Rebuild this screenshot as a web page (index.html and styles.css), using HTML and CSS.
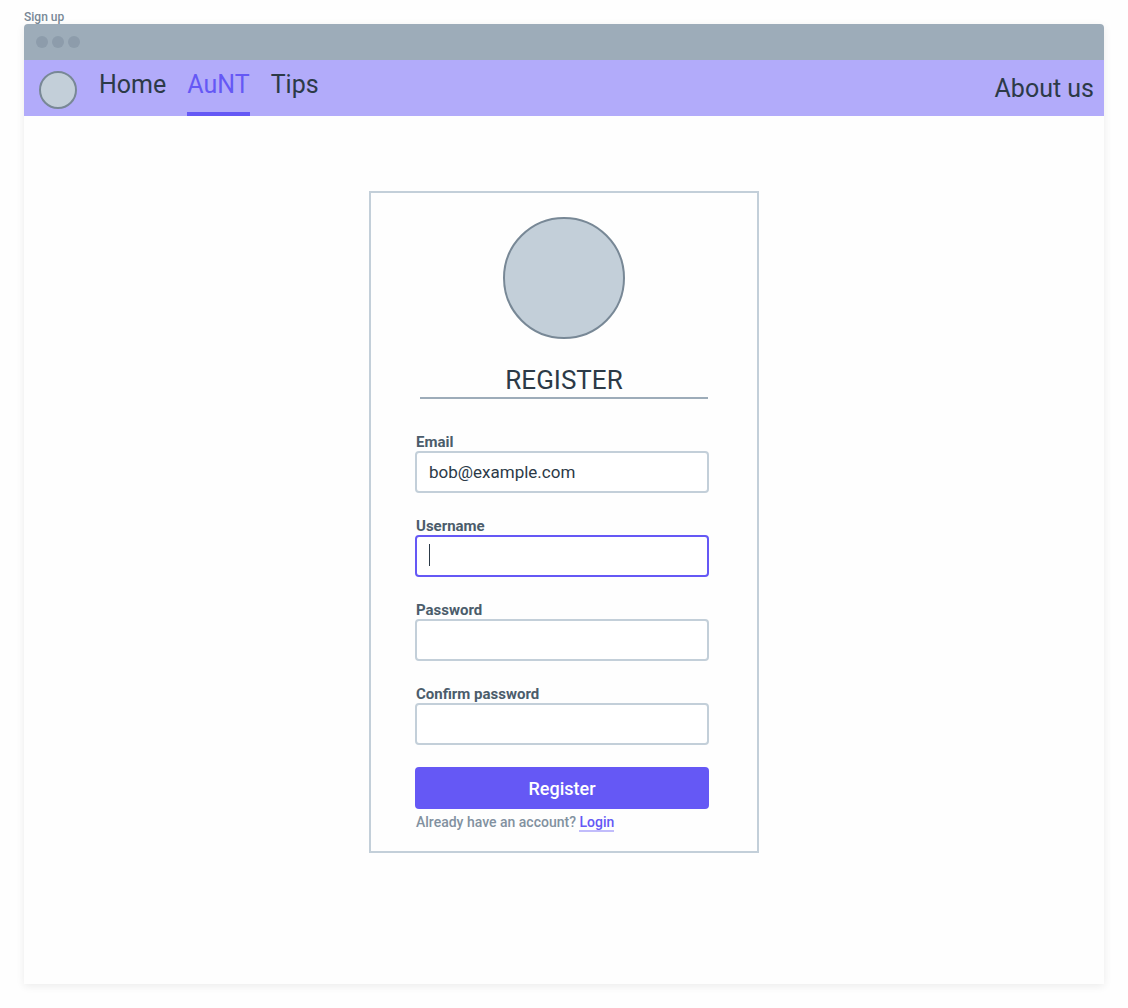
FILE: index.html
```html
<!DOCTYPE html>
<html lang="en">
<head>
  <meta charset="utf-8">
  <meta name="viewport" content="width=device-width, initial-scale=1">
  <title>Sign up</title>
  <link rel="stylesheet" href="styles.css">
</head>
<body>
  <div class="page">
    <p class="page-label">Sign up</p>
    <div class="window">
      <div class="titlebar">
        <span class="dot"></span>
        <span class="dot"></span>
        <span class="dot"></span>
      </div>
      <header class="navbar">
        <a class="logo" href="#" aria-label="Start page"></a>
        <nav class="tabs">
          <a class="tab" href="#">Home</a>
          <a class="tab tab-active" href="#" aria-current="page">AuNT</a>
          <a class="tab" href="#">Tips</a>
        </nav>
        <a class="about" href="#">About us</a>
      </header>
      <main class="content">
        <section class="card">
          <div class="avatar"></div>
          <h1 class="title">REGISTER</h1>
          <form class="form">
            <div class="field">
              <label class="label" for="email">Email</label>
              <input class="input" id="email" type="email" value="bob@example.com">
            </div>
            <div class="field">
              <label class="label" for="username">Username</label>
              <input class="input input-active" id="username" type="text">
            </div>
            <div class="field">
              <label class="label" for="password">Password</label>
              <input class="input" id="password" type="password">
            </div>
            <div class="field">
              <label class="label" for="confirm">Confirm password</label>
              <input class="input" id="confirm" type="password">
            </div>
            <button class="submit" type="submit">Register</button>
          </form>
          <p class="hint">Already have an account? <a class="link" href="#">Login</a></p>
        </section>
      </main>
    </div>
  </div>
</body>
</html>
```

FILE: styles.css
```css
* {
  box-sizing: border-box;
}

body {
  margin: 0;
  background: #fefefe;
  color: #2c3a47;
  font-family: Roboto, "Liberation Sans", sans-serif;
}

.page {
  display: flex;
  flex-direction: column;
  min-height: 100vh;
  padding: 10px 24px 24px;
}

.page-label {
  margin: 0;
  color: #788896;
  font-size: 12px;
  font-weight: 500;
  line-height: 14px;
}

.window {
  display: flex;
  flex: 1;
  flex-direction: column;
  border-radius: 4px 4px 0 0;
  background: #fefefe;
  box-shadow: 0 2px 8px rgba(0, 0, 0, 0.08);
}

.titlebar {
  display: flex;
  align-items: center;
  gap: 4px;
  height: 36px;
  padding: 0 12px;
  border-radius: 4px 4px 0 0;
  background: #9dacb9;
}

.dot {
  width: 12px;
  height: 12px;
  border-radius: 50%;
  background: #8d9cab;
}

.navbar {
  display: flex;
  height: 56px;
  padding: 0 10px 0 15px;
  background: #b2abfa;
}

.logo {
  width: 38px;
  height: 38px;
  margin: 11px 22px 0 0;
  border: 2px solid #788896;
  border-radius: 50%;
  background: #c3cfd9;
}

.tabs {
  display: flex;
  gap: 21px;
}

.tab {
  border-bottom: 4px solid transparent;
  color: inherit;
  font-size: 25px;
  line-height: 50px;
  text-decoration: none;
}

.tab-active {
  border-bottom-color: #6558f5;
  color: #6558f5;
}

.about {
  margin-left: auto;
  color: inherit;
  font-size: 25px;
  line-height: 58px;
  text-decoration: none;
}

.content {
  flex: 1;
  padding: 75px 24px;
}

.card {
  width: 100%;
  max-width: 390px;
  margin: 0 auto;
  padding: 24px 0 16px;
  border: 2px solid #c3cfd9;
}

.avatar {
  width: 122px;
  height: 122px;
  margin: 0 auto 24px;
  border: 2px solid #788896;
  border-radius: 50%;
  background: #c3cfd9;
}

.title {
  margin: 0 49px 32px;
  border-bottom: 2px solid #9dacb9;
  font-size: 26px;
  font-weight: 400;
  line-height: 34px;
  text-align: center;
}

.form {
  display: grid;
  gap: 22px;
  padding: 0 48px 0 44px;
}

.field {
  display: grid;
}

.label {
  padding: 2px 0 0 1px;
  color: #4b5c6b;
  font-size: 15px;
  font-weight: 700;
  line-height: 18px;
}

.input {
  width: 100%;
  height: 42px;
  padding: 0 12px;
  border: 2px solid #c3cfd9;
  border-radius: 4px;
  outline: none;
  background: #ffffff;
  color: inherit;
  font-family: inherit;
  font-size: 17px;
}

.input:focus,
.input-active {
  border-color: #6558f5;
}

/* Resting text cursor in the field that is ready for input */
.input-active {
  background: linear-gradient(#2c3a47, #2c3a47) 12px 7px / 1px 22px no-repeat #ffffff;
}

.submit {
  height: 42px;
  padding: 0;
  border: 0;
  border-radius: 4px;
  background: #6558f5;
  color: #ffffff;
  font-family: inherit;
  font-size: 18px;
  font-weight: 500;
}

.hint {
  margin: 0;
  padding-left: 45px;
  color: #8291a0;
  font-size: 14px;
  font-weight: 500;
  line-height: 26px;
}

.link {
  border-bottom: 2px solid #c1bcfb;
  color: #6558f5;
  text-decoration: none;
}
```
